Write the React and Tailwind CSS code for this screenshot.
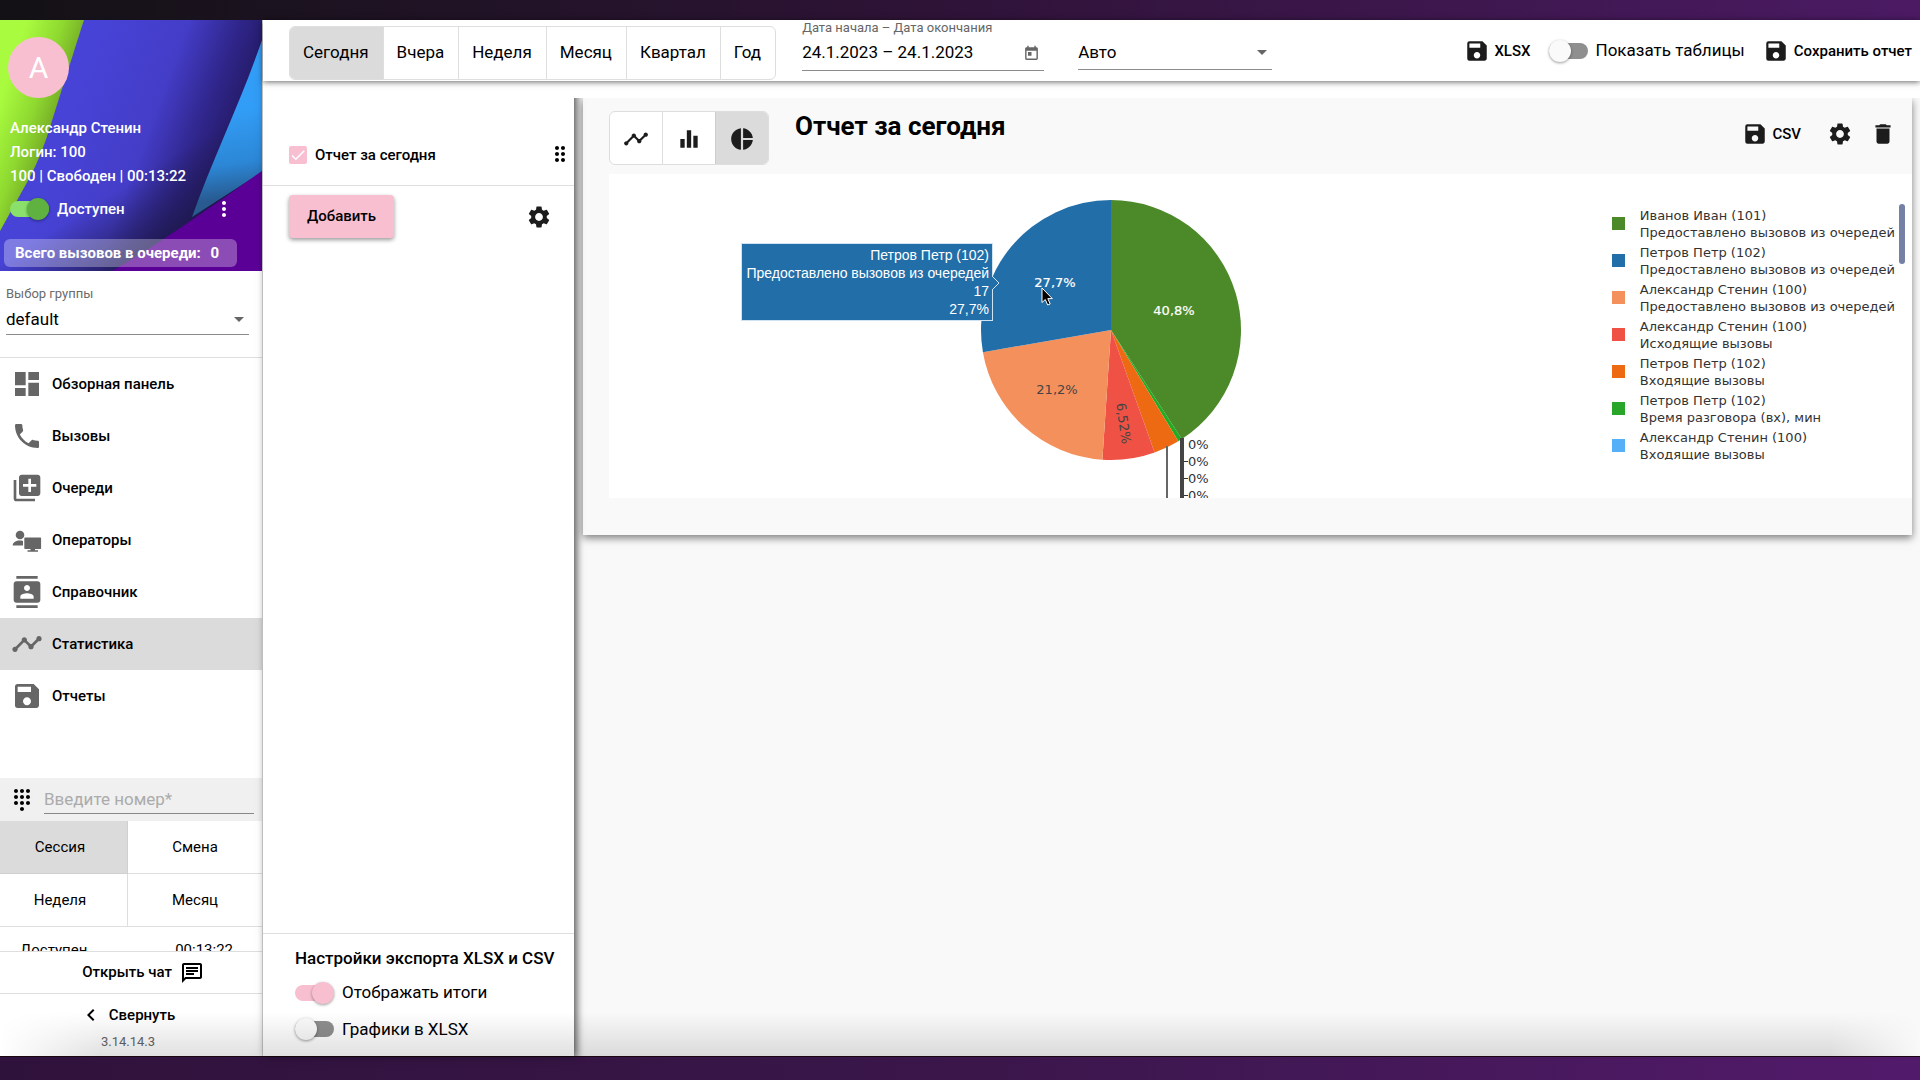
import React from "react";
import { MdDashboard, MdPhone, MdQueue, MdContacts, MdTimeline, MdSave, MdDialpad, MdChevronLeft, MdMoreVert, MdDragIndicator, MdSettings, MdDelete, MdPieChart, MdEqualizer, MdOutlineChat, MdArrowDropDown, MdCheck } from "react-icons/md";

const CX = 502;
const CY = 156;
const R = 130;

const slices = [
  { from: 0, to: 147, color: "#4c8a29" },
  { from: 147, to: 148.8, color: "#22ac24" },
  { from: 148.8, to: 160.4, color: "#ee6a12" },
  { from: 160.4, to: 183.8, color: "#ef5245" },
  { from: 183.8, to: 260.2, color: "#f4905b" },
  { from: 260.2, to: 360, color: "#226ea8" },
];

const legend = [
  ["Иванов Иван (101)", "Предоставлено вызовов из очередей", "bg-[#4c8a29]"],
  ["Петров Петр (102)", "Предоставлено вызовов из очередей", "bg-[#226ea8]"],
  ["Александр Стенин (100)", "Предоставлено вызовов из очередей", "bg-[#f4905b]"],
  ["Александр Стенин (100)", "Исходящие вызовы", "bg-[#ef5245]"],
  ["Петров Петр (102)", "Входящие вызовы", "bg-[#ee6a12]"],
  ["Петров Петр (102)", "Время разговора (вх), мин", "bg-[#29a629]"],
  ["Александр Стенин (100)", "Входящие вызовы", "bg-[#55b0f8]"],
];

const point = (deg) => {
  const a = (deg * Math.PI) / 180;
  return `${CX + R * Math.sin(a)} ${CY - R * Math.cos(a)}`;
};

const slicePath = ({ from, to }) =>
  `M${CX} ${CY}L${point(from)}A${R} ${R} 0 ${to - from > 180 ? 1 : 0} 1 ${point(to)}Z`;

function OperatorIcon({ className }) {
  return (
    <svg viewBox="0 0 32 32" fill="currentColor" className={className} aria-hidden="true">
      <circle cx="9" cy="11" r="4.300" />
      <path d="M1.700 21.500c0-3.300 3.600-4.900 7-4.900 1.200 0 2.300.1 3.300.4v4.500z" />
      <path d="M14 13.500h15.400a.7.700 0 0 1 .7.700v10a.7.700 0 0 1-.7.700H24v1.400h3v1.500H16.500v-1.500h3v-1.400H14a.7.700 0 0 1-.7-.7v-10a.7.700 0 0 1 .7-.7z" />
    </svg>
  );
}

function CalendarIcon({ className }) {
  return (
    <svg viewBox="0 0 24 24" fill="currentColor" className={className} aria-hidden="true">
      <path d="M19 3h-1V1h-2v2H8V1H6v2H5c-1.110 0-1.990.9-1.990 2L3 19c0 1.100.89 2 2 2h14c1.100 0 2-.9 2-2V5c0-1.100-.9-2-2-2zm0 16H5V8h14v11zM7 10h5v5H7z" />
    </svg>
  );
}

function Toggle({ id, label, checked, on, text }) {
  const track = checked ? on.track : "bg-[#8f8f8f]";
  const knob = checked ? on.knob : "bg-[#fafafa]";
  return (
    <label htmlFor={id} className={`flex items-center gap-2 ${text}`}>
      <span className="relative flex h-6 w-[39px] shrink-0 items-center">
        <input id={id} type="checkbox" role="switch" defaultChecked={checked} className="absolute inset-0 appearance-none" />
        <span className={`h-4 w-full rounded-full ${track}`} />
        <span className={`pointer-events-none absolute size-[22px] rounded-full shadow-[0_1px_3px_rgba(0,0,0,0.4)] ${knob} ${checked ? "right-0" : "left-0"}`} />
      </span>
      {label}
    </label>
  );
}

function ProfileHeader() {
  return (
    <section className="relative h-[251px] shrink-0 overflow-hidden px-2 text-white">
      <svg viewBox="0 0 262 251" preserveAspectRatio="none" className="absolute inset-0 size-full" aria-hidden="true">
        <defs>
          <linearGradient id="lime" gradientUnits="userSpaceOnUse" x1="14" y1="40" x2="78" y2="62">
            <stop offset="0" stopColor="#a9fb3f" />
            <stop offset="0.5" stopColor="#8fd930" />
            <stop offset="1" stopColor="#6c9c22" />
          </linearGradient>
          <linearGradient id="indigo" gradientUnits="userSpaceOnUse" x1="70" y1="90" x2="226" y2="148">
            <stop offset="0" stopColor="#4743d6" />
            <stop offset="0.48" stopColor="#443dc8" />
            <stop offset="0.78" stopColor="#2f2589" />
            <stop offset="1" stopColor="#231a63" />
          </linearGradient>
          <linearGradient id="sky" gradientUnits="userSpaceOnUse" x1="240" y1="90" x2="252" y2="176">
            <stop offset="0" stopColor="#329df6" />
            <stop offset="0.6" stopColor="#2c87d6" />
            <stop offset="1" stopColor="#28598f" />
          </linearGradient>
          <linearGradient id="dusk" gradientUnits="userSpaceOnUse" x1="98" y1="182" x2="136" y2="242">
            <stop offset="0" stopColor="#1c1747" stopOpacity="0" />
            <stop offset="1" stopColor="#1c1747" stopOpacity="0.8" />
          </linearGradient>
        </defs>
        <rect width="262" height="251" fill="url(#indigo)" />
        <path d="M0 251V100H262V251z" fill="url(#dusk)" />
        <path d="M0 0H84C78 18 74 32 68 50L50 107Q42 134 30 157L0 211z" fill="url(#lime)" />
        <path d="M262 20V152L192 197C212 140 240 84 262 20z" fill="url(#sky)" />
        <path d="M262 151V251H112C162 222 212 186 262 151z" fill="#5a0096" />
      </svg>
      <div className="relative flex flex-col items-start">
        <div className="mt-[17px] flex size-[61px] items-center justify-center rounded-full bg-[#f8bfd0] text-[30px] leading-none">А</div>
        <div className="mt-[18px] pl-[2px] text-[15px] leading-6 font-medium">
          <p>Александр Стенин</p>
          <p>Логин: 100</p>
          <p>100 | Свободен | 00:13:22</p>
        </div>
        <div className="mt-[9px] flex w-full items-center justify-between pr-[18px] pl-[2px]">
          <Toggle id="available" label="Доступен" checked on={{ track: "bg-[#8ae06a]", knob: "bg-[#5fb23f]" }} text="text-[15px] font-medium" />
          <button type="button" aria-label="Меню"><MdMoreVert className="size-6" /></button>
        </div>
        <div className="mt-[18px] -ml-1 flex h-7 w-[233px] items-center justify-between rounded-md bg-white/30 pr-[18px] pl-[11px] text-[15px] font-bold">
          <span>Всего вызовов в очереди:</span><span>0</span>
        </div>
      </div>
    </section>
  );
}

const nav = [
  ["Обзорная панель", MdDashboard],
  ["Вызовы", MdPhone],
  ["Очереди", MdQueue],
  ["Операторы", OperatorIcon],
  ["Справочник", MdContacts],
  ["Статистика", MdTimeline],
  ["Отчеты", MdSave],
];

function Sidebar() {
  return (
    <aside className="flex w-[263px] shrink-0 flex-col border-r border-[#dedede] bg-white">
      <ProfileHeader />
      <div className="h-[87px] shrink-0 border-b border-[#dedede] px-1.5 pt-3">
        <label htmlFor="group" className="block text-[13px] leading-[22px] text-[#6b6b6b]">Выбор группы</label>
        <div className="relative w-[243px] border-b border-[#8c8c8c]">
          <select id="group" className="h-[29px] w-full appearance-none bg-transparent text-[17px] outline-none">
            <option>default</option>
          </select>
          <MdArrowDropDown className="pointer-events-none absolute top-0.5 -right-0.5 size-6 text-[#666]" />
        </div>
      </div>
      <nav>
        {nav.map(([label, Icon]) => (
          <a key={label} href="#" className={`flex h-[52px] items-center gap-[9px] pl-[11px] text-[15px] font-medium ${label === "Статистика" ? "bg-[#dbdbdb]" : ""}`}>
            <Icon className="size-8 text-[#666]" />
            {label}
          </a>
        ))}
      </nav>
      <div className="mt-auto flex h-[43px] shrink-0 items-center gap-2.5 bg-[#f0f0f0] pr-2 pl-2.5">
        <MdDialpad className="size-6 shrink-0" />
        <input aria-label="Введите номер" placeholder="Введите номер*" className="h-7 min-w-0 flex-1 border-b border-[#888] bg-transparent text-[17px] outline-none placeholder:text-[#ababab]" />
      </div>
      <div className="grid shrink-0 grid-cols-[128px_1fr] text-[15px]">
        <button type="button" className="h-[53px] border-r border-b border-[#d0d0d0] bg-[#dbdbdb] pr-[7px]">Сессия</button>
        <button type="button" className="h-[53px] border-b border-[#dedede]">Смена</button>
        <button type="button" className="h-[53px] border-r border-b border-[#dedede] pr-[7px]">Неделя</button>
        <button type="button" className="h-[53px] border-b border-[#dedede]">Месяц</button>
      </div>
      <div className="flex h-[25px] shrink-0 justify-between overflow-hidden border-b border-[#dedede] pt-[11px] pr-[29px] pl-5 text-[15px] leading-6">
        <span>Доступен</span><span>00:13:22</span>
      </div>
      <button type="button" className="flex h-[42px] shrink-0 items-center justify-center gap-2 border-b border-[#dedede] pl-6 text-[15px] font-medium">
        Открыть чат <MdOutlineChat className="size-6" />
      </button>
      <div className="h-[62px] shrink-0 pt-[7px] text-center">
        <button type="button" className="flex h-7 w-full items-center justify-center gap-1.5 pr-2 text-[15px] font-medium">
          <MdChevronLeft className="size-6" /> Свернуть
        </button>
        <p className="pr-1.5 text-[13px] leading-[26px] text-[#666]">3.14.14.3</p>
      </div>
    </aside>
  );
}

function TopBar() {
  return (
    <header className="relative z-20 flex h-[61px] items-start bg-white pr-2 pl-[26px] shadow-[0_1px_6px_rgba(0,0,0,0.6)]">
      <div className="mt-1.5 flex h-[54px] shrink-0 overflow-hidden rounded-md border border-[#dedede] text-[17px]">
        {["Сегодня", "Вчера", "Неделя", "Месяц", "Квартал", "Год"].map((t, i) => (
          <button key={t} type="button" className={`pr-[14px] pl-[13px] ${i ? "border-l border-[#dedede]" : "bg-[#dbdbdb]"}`}>{t}</button>
        ))}
      </div>
      <div className="ml-[26px] w-[242px] shrink-0">
        <label htmlFor="range" className="block text-[13px] leading-4 text-[#666]">Дата начала – Дата окончания</label>
        <div className="flex h-[35px] items-center border-b border-[#8c8c8c] pr-1">
          <input id="range" defaultValue="24.1.2023 – 24.1.2023" className="min-w-0 flex-1 bg-transparent text-[17px] outline-none" />
          <button type="button" aria-label="Календарь"><CalendarIcon className="size-[17px] text-[#666]" /></button>
        </div>
      </div>
      <div className="relative mt-4 ml-[34px] w-[194px] shrink-0 border-b border-[#8c8c8c]">
        <select aria-label="Интервал" className="h-[33px] w-full appearance-none bg-transparent text-[17px] outline-none"><option>Авто</option></select>
        <MdArrowDropDown className="pointer-events-none absolute top-1 -right-0.5 size-6 text-[#666]" />
      </div>
      <div className="ml-auto flex h-[62px] items-center text-[15px] font-medium">
        <button type="button" className="flex items-center gap-1"><MdSave className="size-[26px] text-[#1c1c1c]" />XLSX</button>
        <div className="mr-[18px] ml-[18px]">
          <Toggle id="tables" label="Показать таблицы" text="text-[17px] font-normal whitespace-nowrap" />
        </div>
        <button type="button" className="flex items-center gap-[5px] whitespace-nowrap"><MdSave className="size-[26px] text-[#1c1c1c]" />Сохранить отчет</button>
      </div>
    </header>
  );
}

function ReportList() {
  return (
    <section className="relative flex w-[311px] shrink-0 flex-col bg-white shadow-[2px_0_8px_rgba(0,0,0,0.5)]">
      <div className="flex h-[105px] shrink-0 items-end border-b border-[#dedede] pr-0.5 pb-[19px] pl-[26px]">
        <label className="flex flex-1 items-center gap-2 text-[15px] font-medium">
          <span className="relative flex size-[18px]">
            <input type="checkbox" defaultChecked className="size-[18px] appearance-none rounded-xs bg-[#f8bfd0]" />
            <MdCheck className="pointer-events-none absolute inset-0 size-[18px] text-white" />
          </span>
          Отчет за сегодня
        </label>
        <MdDragIndicator className="size-6" />
      </div>
      <div className="flex items-center justify-between pt-[9px] pr-[22px] pl-[26px]">
        <button type="button" className="h-[43px] rounded bg-[#f8bfd0] px-[18px] text-[15px] font-medium shadow-[0_2px_4px_rgba(0,0,0,0.4)]">Добавить</button>
        <button type="button" aria-label="Настройки"><MdSettings className="size-[26px] text-[#1c1c1c]" /></button>
      </div>
      <div className="mt-auto h-[123px] border-t border-[#dedede] pt-2.5 pl-8">
        <h2 className="text-[17px] leading-7 font-medium whitespace-nowrap">Настройки экспорта XLSX и CSV</h2>
        <div className="mt-2 flex flex-col gap-[11px]">
          <Toggle id="totals" label="Отображать итоги" checked on={{ track: "bg-[#f8bfd0]", knob: "bg-[#f8bfd0]" }} text="text-[17px]" />
          <Toggle id="charts" label="Графики в XLSX" text="text-[17px]" />
        </div>
      </div>
    </section>
  );
}

function PieReport() {
  return (
    <div className="relative flex h-[324px] overflow-hidden bg-white">
      <svg viewBox="0 0 780 324" className="h-[324px] w-[780px] shrink-0" fontFamily="Verdana, 'DejaVu Sans', sans-serif" fontSize="13">
        {slices.map((s) => <path key={s.from} d={slicePath(s)} fill={s.color} />)}
        <path d="M557 272h2V324h-2z" fill="#666" />
        <path d="M571 264h4V324h-4z" fill="#444" />
        <g fill="#333">
          {[275, 292, 309, 326].map((y) => <text key={y} x="579" y={y}>0%</text>)}
        </g>
        <path d="M575 287h4v1h-4zM575 304h4v1h-4zM575 321h4v1h-4z" fill="#333" />
        <g textAnchor="middle" fill="#fff" stroke="#fff" strokeWidth="0.200">
          <text x="446" y="113">27,7%</text>
          <text x="565" y="141">40,8%</text>
        </g>
        <g textAnchor="middle" fill="#444">
          <text x="448" y="220">21,2%</text>
          <text transform="translate(510 250) rotate(82)">6,52%</text>
        </g>
      </svg>
      <div className="absolute top-[69px] left-[132px] w-[252px] border border-[#cfe3f2] bg-[#226ea8] px-[3px] py-0.5 text-right font-['Liberation_Sans',sans-serif] text-[14px] leading-[18px] whitespace-nowrap text-white">
        <p>Петров Петр (102)</p>
        <p>Предоставлено вызовов из очередей</p>
        <p>17</p>
        <p>27,7%</p>
        <svg viewBox="0 0 8 14" className="absolute top-8 -right-[8px] h-3.5 w-2" aria-hidden="true">
          <path d="M0 0L7 7L0 14" fill="#226ea8" stroke="#cfe3f2" />
        </svg>
      </div>
      <svg viewBox="0 0 12 19" className="absolute top-[113px] left-[432px] h-[19px] w-3" aria-hidden="true">
        <path d="M1 1V15.500L4.300 12.500L6.700 18L9.200 17L6.800 11.600H11.300Z" fill="#000" stroke="#fff" />
      </svg>
      <ul className="mt-[30px] ml-auto h-[256px] overflow-hidden font-['DejaVu_Sans',sans-serif] text-[13px] leading-[17px] whitespace-nowrap text-[#333]">
        {legend.map(([name, metric, swatch], i) => (
          <li key={i} className="flex h-[37px] gap-[15px]">
            <span className={`mt-[13px] size-[13px] ${swatch}`} />
            <span className="mt-[3px]">{name}<br />{metric}</span>
          </li>
        ))}
      </ul>
      <div className="mt-[30px] mr-[7px] ml-1 h-[60px] w-1.5 rounded-full bg-[#7480a4]" />
    </div>
  );
}

function ReportCard() {
  return (
    <article className="mr-2 ml-[9px] bg-[#f9f9f9] pb-[37px] pl-[26px] shadow-[0_3px_8px_rgba(0,0,0,0.5)]">
      <div className="flex h-[76px] items-start pt-[13px]">
        <div className="flex h-[54px] overflow-hidden rounded-md border border-[#dedede] bg-white text-[#1c1c1c]">
          <button type="button" aria-label="Линейный график" className="flex w-[52px] items-center justify-center pt-0.5"><MdTimeline className="size-[26px]" /></button>
          <button type="button" aria-label="Столбцы" className="flex w-[53px] items-center justify-center border-l border-[#dedede] pt-0.5"><MdEqualizer className="size-[26px]" /></button>
          <button type="button" aria-label="Круговая диаграмма" className="flex w-[53px] items-center justify-center border-l border-[#ccc] bg-[#dbdbdb] pt-0.5"><MdPieChart className="size-[26px]" /></button>
        </div>
        <h1 className="ml-[26px] text-[26px] leading-[30px] font-bold">Отчет за сегодня</h1>
        <div className="ml-auto flex h-[46px] items-center pr-4 text-[15px] font-medium">
          <button type="button" className="flex items-center gap-1"><MdSave className="size-[26px] text-[#1c1c1c]" />CSV</button>
          <button type="button" aria-label="Настройки" className="ml-[26px]"><MdSettings className="size-[26px] text-[#1c1c1c]" /></button>
          <button type="button" aria-label="Удалить" className="ml-[17px]"><MdDelete className="size-[26px] text-[#1c1c1c]" /></button>
        </div>
      </div>
      <PieReport />
    </article>
  );
}

export default function App() {
  return (
    <div className="flex min-h-screen flex-col bg-linear-to-r from-[#131115] via-[#2f1338] to-[#4b1a63] font-[Roboto,sans-serif] text-black">
      <div className="h-5 shrink-0" />
      <div className="relative flex flex-1 bg-white">
        <Sidebar />
        <div className="flex min-w-0 flex-1 flex-col">
          <TopBar />
          <main className="flex flex-1">
            <ReportList />
            <div className="flex min-w-0 flex-1 flex-col">
              <div className="relative z-10 h-[17px] shrink-0 bg-white" />
              <div className="flex-1 bg-[#f9f9f9] shadow-[inset_10px_0_8px_-8px_rgba(0,0,0,0.35)]">
                <ReportCard />
              </div>
            </div>
          </main>
        </div>
        <div className="pointer-events-none absolute inset-x-0 bottom-0 h-11 bg-linear-to-t from-black/12 to-transparent [mask-image:linear-gradient(to_right,transparent,black_100px,black_calc(100%-90px),transparent)]" />
      </div>
      <div className="h-6 shrink-0 border-t border-[#1a0712] bg-linear-to-r from-[#2f123b] via-[#3a164a] to-[#521a6b]" />
    </div>
  );
}
